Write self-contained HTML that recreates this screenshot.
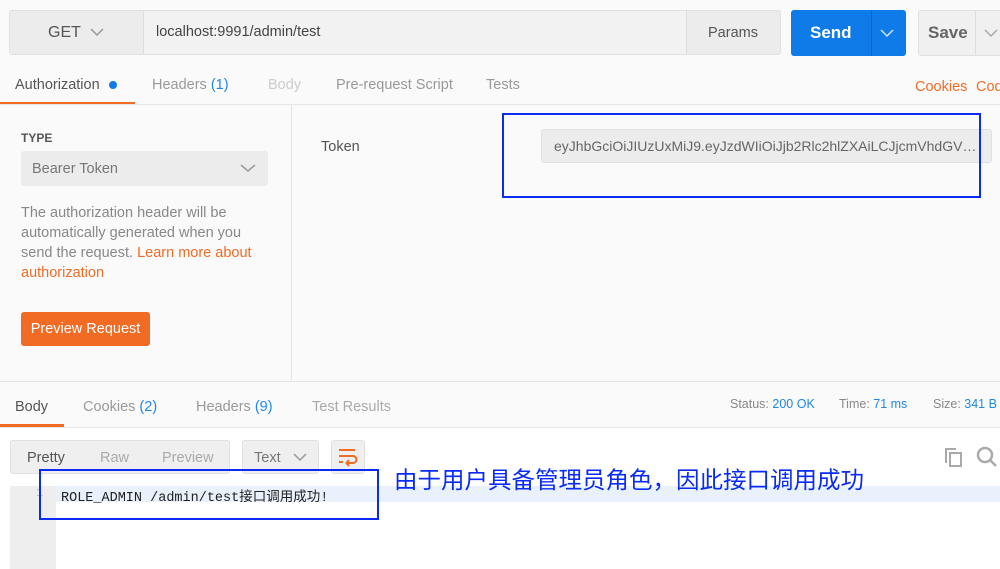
<!DOCTYPE html>
<html><head><meta charset="utf-8"><style>
*{margin:0;padding:0;box-sizing:border-box}
body{width:1000px;height:569px;overflow:hidden;background:#fafafa;font-family:"Liberation Sans","Noto Sans CJK SC",sans-serif;position:relative;color:#505050}
.a{position:absolute;white-space:nowrap}
.box{position:absolute;border:1px solid #e0e0e0;background:#f0f0f0;border-radius:3px}
</style></head><body>
<div class="box" style="left:9px;top:10px;width:772px;height:45px;background:#ececec"></div>
<div class="a" style="left:143px;top:11px;width:544px;height:43px;background:#f2f2f2;border-left:1px solid #ddd;border-right:1px solid #ddd"></div>
<div class="a" style="left:48px;top:24px;font-size:16px;color:#555">GET</div>
<svg class="a" style="left:90px;top:28px" width="14" height="9"><path d="M1 1l6 6 6-6" fill="none" stroke="#999" stroke-width="1.5"/></svg>
<div class="a" style="left:156px;top:24px;font-size:14.5px;color:#444">localhost:9991/admin/test</div>
<div class="a" style="left:708px;top:25px;font-size:14.5px;color:#555">Params</div>
<div class="a" style="left:791px;top:10px;width:115px;height:46px;background:#0e7be8;border-radius:3px"></div>
<div class="a" style="left:871px;top:10px;width:1px;height:46px;background:#0a63bd"></div>
<div class="a" style="left:810px;top:23px;font-size:17px;font-weight:bold;color:#fff">Send</div>
<svg class="a" style="left:880px;top:29px" width="14" height="9"><path d="M1 1l6 6 6-6" fill="none" stroke="#cfe3fa" stroke-width="1.5"/></svg>
<div class="box" style="left:918px;top:10px;width:100px;height:46px;background:#f0f0f0"></div>
<div class="a" style="left:975px;top:11px;width:1px;height:44px;background:#ddd"></div>
<div class="a" style="left:928px;top:23px;font-size:17px;color:#666;font-weight:bold">Save</div>
<svg class="a" style="left:984px;top:29px" width="14" height="9"><path d="M1 1l6 6 6-6" fill="none" stroke="#aaa" stroke-width="1.5"/></svg>
<div class="a" style="left:15px;top:77px;font-size:14.5px;color:#555">Authorization</div>
<div class="a" style="left:109px;top:81px;width:8px;height:8px;border-radius:50%;background:#0e7be8"></div>
<div class="a" style="left:0;top:102px;width:135px;height:3px;background:#f26b25"></div>
<div class="a" style="left:152px;top:77px;font-size:14.5px;color:#999">Headers <span style="color:#1e88e5">(1)</span></div>
<div class="a" style="left:268px;top:77px;font-size:14.5px;color:#ccc">Body</div>
<div class="a" style="left:336px;top:77px;font-size:14.5px;color:#999">Pre-request Script</div>
<div class="a" style="left:486px;top:77px;font-size:14.5px;color:#999">Tests</div>
<div class="a" style="left:915px;top:79px;font-size:14.5px;color:#f26b25">Cookies</div>
<div class="a" style="left:976px;top:79px;font-size:14.5px;color:#f26b25">Code</div>
<div class="a" style="left:0;top:104px;width:1000px;height:1px;background:#e6e6e6"></div>
<div class="a" style="left:291px;top:105px;width:1px;height:275px;background:#e4e4e4"></div>
<div class="a" style="left:21px;top:131px;font-size:12px;font-weight:bold;color:#555">TYPE</div>
<div class="a" style="left:21px;top:151px;width:247px;height:35px;background:#ececec;border-radius:3px"></div>
<div class="a" style="left:32px;top:161px;font-size:14.5px;color:#777">Bearer Token</div>
<svg class="a" style="left:240px;top:164px" width="16" height="9"><path d="M1 1l7 6 7-6" fill="none" stroke="#999" stroke-width="1.5"/></svg>
<div class="a" style="left:21px;top:203px;font-size:14.5px;line-height:20px;color:#888">The authorization header will be<br>automatically generated when you<br>send the request. <span style="color:#f26b25">Learn more about</span><br><span style="color:#f26b25">authorization</span></div>
<div class="a" style="left:21px;top:312px;width:129px;height:34px;background:#f26b25;border-radius:3px;color:#fff;font-size:14.5px;text-align:center;line-height:34px">Preview Request</div>
<div class="a" style="left:321px;top:139px;font-size:14.5px;color:#555">Token</div>
<div class="a" style="left:541px;top:129px;width:451px;height:34px;background:#ececec;border:1px solid #e0e0e0;border-radius:3px"></div>
<div class="a" style="left:554px;top:138px;font-size:14px;color:#666;width:428px;overflow:hidden;text-overflow:ellipsis">eyJhbGciOiJIUzUxMiJ9.eyJzdWIiOiJjb2Rlc2hlZXAiLCJjcmVhdGVkIjox...</div>
<div class="a" style="left:502px;top:113px;width:479px;height:85px;border:2px solid #0a2af5"></div>
<div class="a" style="left:0;top:381px;width:1000px;height:1px;background:#e4e4e4"></div>
<div class="a" style="left:15px;top:399px;font-size:14.5px;color:#555">Body</div>
<div class="a" style="left:0;top:424px;width:64px;height:3px;background:#f26b25"></div>
<div class="a" style="left:83px;top:399px;font-size:14.5px;color:#999">Cookies <span style="color:#1e88e5">(2)</span></div>
<div class="a" style="left:196px;top:399px;font-size:14.5px;color:#999">Headers <span style="color:#1e88e5">(9)</span></div>
<div class="a" style="left:312px;top:399px;font-size:14.5px;color:#aaa">Test Results</div>
<div class="a" style="left:730px;top:397px;font-size:12.5px;color:#888">Status: <span style="color:#1e88e5">200 OK</span></div>
<div class="a" style="left:839px;top:397px;font-size:12.5px;color:#888">Time: <span style="color:#1e88e5">71 ms</span></div>
<div class="a" style="left:933px;top:397px;font-size:12.5px;color:#888">Size: <span style="color:#1e88e5">341 B</span></div>
<div class="a" style="left:0;top:427px;width:1000px;height:142px;background:#fff;border-top:1px solid #e6e6e6"></div>
<div class="box" style="left:10px;top:440px;width:220px;height:34px;background:#efefef"></div>
<div class="a" style="left:27px;top:450px;font-size:14.5px;color:#555">Pretty</div>
<div class="a" style="left:100px;top:450px;font-size:14.5px;color:#aaa">Raw</div>
<div class="a" style="left:162px;top:450px;font-size:14.5px;color:#aaa">Preview</div>
<div class="box" style="left:242px;top:440px;width:77px;height:34px;background:#efefef"></div>
<div class="a" style="left:254px;top:450px;font-size:14.5px;color:#777">Text</div>
<svg class="a" style="left:293px;top:453px" width="14" height="9"><path d="M1 1l6 6 6-6" fill="none" stroke="#999" stroke-width="1.5"/></svg>
<div class="box" style="left:331px;top:440px;width:34px;height:34px;background:#efefef"></div>
<svg class="a" style="left:337px;top:446px" width="22" height="22"><path d="M2 4h16M2 10h14a3.5 3.5 0 0 1 0 7H10M2 16h4M12 14l-2.5 3 2.5 3" fill="none" stroke="#f26b25" stroke-width="2"/></svg>
<svg class="a" style="left:943px;top:446px" width="22" height="22"><path d="M3 17V3h10M7 7h11v13H7z" fill="none" stroke="#aaa" stroke-width="2"/></svg>
<svg class="a" style="left:975px;top:445px" width="25" height="25"><circle cx="10" cy="10" r="7" fill="none" stroke="#aaa" stroke-width="2.5"/><path d="M15 15l6 6" stroke="#aaa" stroke-width="2.5"/></svg>
<div class="a" style="left:10px;top:486px;width:46px;height:83px;background:#eee"></div>
<div class="a" style="left:56px;top:486px;width:944px;height:16px;background:#e9f1fc"></div>
<div class="a" style="left:36px;top:486px;font-size:12px;color:#bbb;font-family:'Liberation Mono',monospace">1</div>
<div class="a" style="left:61px;top:485px;font-size:13.5px;color:#222;font-family:'Liberation Mono','Noto Sans CJK SC',monospace">ROLE_ADMIN /admin/test接口调用成功!</div>
<div class="a" style="left:39px;top:469px;width:340px;height:51px;border:2px solid #0a2af5"></div>
<div class="a" style="left:394px;top:461px;font-size:23.5px;color:#0a2af5;font-family:'Noto Sans CJK SC',sans-serif">由于用户具备管理员角色，因此接口调用成功</div>
</body></html>
